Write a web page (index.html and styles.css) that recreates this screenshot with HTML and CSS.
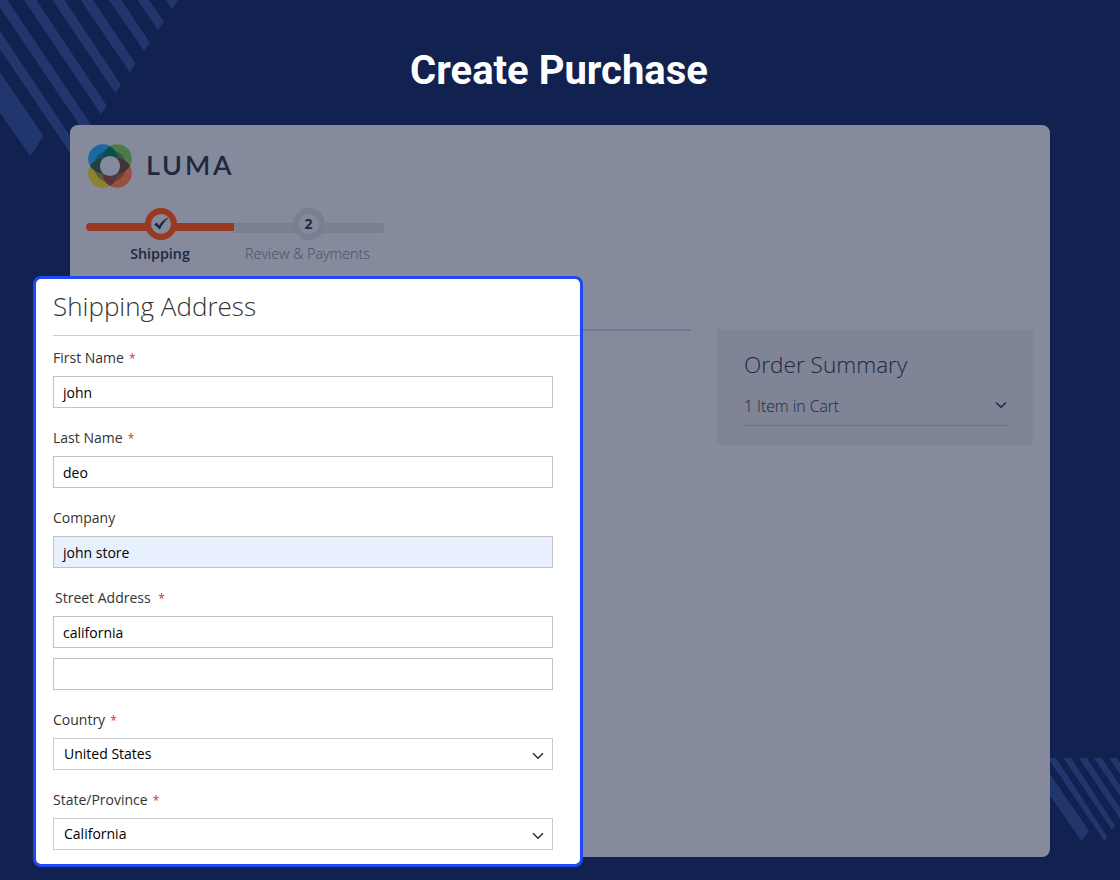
FILE: index.html
```html
<!DOCTYPE html>
<html lang="en">
<head>
<meta charset="utf-8">
<title>Create Purchase</title>
<link rel="stylesheet" href="styles.css">
</head>
<body>
<main class="page">
  <svg class="stripes stripes-top" viewBox="0 0 540 480" aria-hidden="true">
    <path d="M0 217L131 408 91 468 0 338zM0 93L235 445 218 470 0 148zM-15 0H22L278 381 260 407zM72 0H109L321 318 303 343zM157 0H194L363 254 346 280zM242 0H279L406 190 389 217zM327 0H364L449 127 432 153zM413 0H447L492 65 474 90zM497 0H535L517 27z"/>
  </svg>
  <svg class="stripes stripes-bottom" viewBox="0 0 210 255" aria-hidden="true">
    <path d="M0 48L117 218 95 250 0 113zM-6 0H18L172 237 163 250zM40 0H63L196 203 186 216zM87 0H110L210 150V182zM132 0H155L210 82V115zM178 0H200L210 15V48z"/>
  </svg>
  <h1 class="title">Create Purchase</h1>

  <section class="card">
    <header class="brand">
      <svg class="brand-mark" viewBox="0 0 131 130" aria-hidden="true">
        <defs>
          <clipPath id="c1"><circle cx="44" cy="43.5" r="43.5"/></clipPath>
          <clipPath id="c2"><circle cx="87" cy="43.5" r="43.5"/></clipPath>
          <clipPath id="c3"><circle cx="44" cy="86" r="43.5"/></clipPath>
        </defs>
        <circle cx="44" cy="43.5" r="43.5" fill="#1b699f"/>
        <circle cx="87" cy="43.5" r="43.5" fill="#50794a"/>
        <circle cx="44" cy="86" r="43.5" fill="#8b812f"/>
        <circle cx="87" cy="86" r="43.5" fill="#99503f"/>
        <circle cx="65.500" cy="65" r="48" fill="#202b42" opacity=".45"/>
        <circle cx="87" cy="43.500" r="43.500" fill="#08514b" clip-path="url(#c1)"/>
        <circle cx="44" cy="86" r="43.500" fill="#233f42" clip-path="url(#c1)"/>
        <circle cx="87" cy="86" r="43.500" fill="#3c3438" clip-path="url(#c2)"/>
        <circle cx="87" cy="86" r="43.500" fill="#57353a" clip-path="url(#c3)"/>
        <circle cx="65.500" cy="65" r="30" fill="#858a9d"/>
      </svg>
      <span class="brand-name">LUMA</span>
    </header>

    <ol class="steps">
      <li class="step step-active">
        <span class="step-dot"><svg class="check" viewBox="0 0 16 14"><path d="M1.200 7.600L3.600 5.500 6.200 8.500C8 5.500 10.500 2.800 14.500.700L15 1.300C11.500 4.500 9 8 6.800 12.600z"/></svg></span>
        <span class="step-label">Shipping</span>
      </li>
      <li class="step step-next">
        <span class="step-dot">2</span>
        <span class="step-label">Review &amp; Payments</span>
      </li>
    </ol>

    <div class="columns">
      <div class="column-rule"></div>
      <aside class="summary">
        <h2 class="summary-title">Order Summary</h2>
        <div class="summary-row">
          <span>1 Item in Cart</span>
          <svg class="summary-arrow" viewBox="0 0 12 8"><path d="M1 1.500L6 6.300 11 1.500"/></svg>
        </div>
      </aside>
    </div>
  </section>

  <section class="panel">
    <h2 class="panel-title">Shipping Address</h2>
    <form class="form">
      <div class="field"><div class="label">First Name <b class="req">*</b></div><div class="input">john</div></div>
      <div class="field"><div class="label">Last Name <b class="req">*</b></div><div class="input">deo</div></div>
      <div class="field"><div class="label">Company</div><div class="input input-filled">john store</div></div>
      <div class="field"><div class="label label-street">Street Address <b class="req">*</b></div><div class="input">california</div><div class="input input-second"></div></div>
      <div class="field"><div class="label">Country <b class="req">*</b></div><div class="input select"><span>United States</span><svg class="arrow" viewBox="0 0 12 8"><path d="M1 1.200L6 6.200 11 1.200"/></svg></div></div>
      <div class="field"><div class="label">State/Province <b class="req">*</b></div><div class="input select"><span>California</span><svg class="arrow" viewBox="0 0 12 8"><path d="M1 1.200L6 6.200 11 1.200"/></svg></div></div>
    </form>
  </section>
</main>
</body>
</html>
```
FILE: styles.css
```css
* { box-sizing: border-box; }
body { margin: 0; font-family: "Open Sans", "Noto Sans", sans-serif; }
h1, h2, ol { margin: 0; padding: 0; }

.page {
  position: relative;
  width: 1120px;
  height: 880px;
  padding: 0 70px;
  overflow: hidden;
  background: #112150;
}

.stripes { position: absolute; fill: #21366d; }
.stripes-top { left: 0; top: 0; width: 180px; height: 160px; }
.stripes-bottom { right: 0; top: 758px; width: 70px; height: 85px; }

.title {
  position: relative;
  height: 125px;
  padding: 47px 2px 0 0;
  color: #fff;
  font: 700 40px/48px Roboto, sans-serif;
  text-align: center;
}

.card {
  position: relative;
  height: 732px;
  padding: 19px 17px 0 16px;
  border-radius: 8px;
  background: #858a9d;
  color: #20283f;
}

.brand { display: flex; align-items: center; height: 44px; padding-left: 2px; }
.brand-mark { width: 44px; height: 44px; }
.brand-name {
  margin-left: 14px;
  padding-bottom: 2px;
  font: 600 27px/42px Lato, sans-serif;
  letter-spacing: 2.800px;
}

.steps {
  display: grid;
  grid-template-columns: 148px 149px;
  width: 297px;
  margin-top: 20px;
  list-style: none;
}
.step {
  display: flex;
  flex-direction: column;
  align-items: center;
  position: relative;
}
.step::before {
  content: "";
  position: absolute;
  top: 15px;
  left: 0;
  width: 100%;
  height: 8px;
}
.step-active::before { border-radius: 4px 0 0 4px; background: #983a22; }
.step-next::before {
  border: 1px solid #777c8f;
  border-left: 0;
  border-radius: 0 4px 4px 0;
  background: #7b8093;
}
.step-dot {
  position: relative;
  display: flex;
  align-items: center;
  justify-content: center;
  width: 32px;
  height: 32px;
  border: 6px solid #797e91;
  border-radius: 50%;
  background: #858a9d;
  font-size: 14px;
  font-weight: 700;
  line-height: 18px;
}
.step-next .step-dot { padding-bottom: 1px; }
.step-active .step-dot { left: 1px; border-color: #983a22; }
.check { width: 16px; height: 14px; flex: none; fill: #1b2742; }
.step-label {
  margin-top: 4px;
  color: #474e66;
  font-size: 14.300px;
  font-weight: 300;
  line-height: 20px;
  white-space: nowrap;
  transform: translateX(-1px);
}
.step-active .step-label { color: #20283f; font-weight: 600; transform: none; }

.columns { display: flex; justify-content: space-between; margin-top: 65px; }
.column-rule { width: 605px; height: 2px; background: #757b8e; }
.summary { width: 316px; height: 116px; padding: 21px 26px 0 27px; background: #7f8496; }
.summary-title { font-size: 22.600px; font-weight: 300; line-height: 30px; }
.summary-row {
  display: flex;
  align-items: center;
  justify-content: space-between;
  height: 46px;
  padding-top: 6px;
  border-bottom: 1px solid #6c7186;
  font-size: 15.700px;
  font-weight: 300;
}
.summary-arrow { width: 12px; height: 8px; margin-bottom: 1px; fill: none; stroke: #20283f; stroke-width: 1.500; }

.panel {
  position: absolute;
  left: 33px;
  top: 276px;
  width: 550px;
  height: 591px;
  padding-left: 17px;
  border: 3px solid #1f49f5;
  border-radius: 8px;
  background: #fff;
}
.panel-title {
  height: 57px;
  border-bottom: 1px solid #ccc;
  color: #333;
  font-size: 26px;
  font-weight: 300;
  line-height: 55px;
}
.form { display: flex; flex-direction: column; gap: 20px; width: 500px; margin-top: 12px; }
.label { height: 20px; margin-bottom: 8px; color: #333; font-size: 14px; line-height: 20px; }
.label-street { padding-left: 2px; }
.label-street .req { margin-left: 4px; }
.req { margin-left: 1.500px; color: #e02b27; font-size: 12px; font-weight: 400; }
.input {
  height: 32px;
  padding: 0 9px;
  border: 1px solid #c2c2c2;
  color: #000;
  font-size: 14px;
  line-height: 31px;
}
.input-filled { background: #e8f0fe; }
.input-second { margin-top: 10px; }
.select { display: flex; align-items: center; justify-content: space-between; padding: 0 8px 0 10px; border-color: #ccc; line-height: 30px; }
.arrow { width: 12px; height: 8px; margin-top: 3px; fill: none; stroke: #303030; stroke-width: 1.500; }
```
